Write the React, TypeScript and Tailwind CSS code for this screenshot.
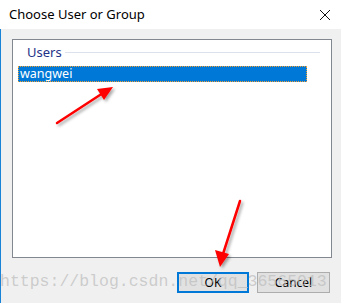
import React from 'react';

const App: React.FC = () => {
    return (
        <div className="relative w-[341px] h-[303px] bg-[#f0f0f0] overflow-hidden font-['Noto_Sans',sans-serif]">
            {/* Title bar */}
            <div className="h-[29px] bg-white flex items-center justify-between pl-[9px] pr-[8px]">
                <span className="text-[13px] text-black leading-none">Choose User or Group</span>
                <svg width="12" height="12" viewBox="0 0 12 12" className="mr-[2px]">
                    <path d="M1 1 L11 11 M11 1 L1 11" stroke="#111" strokeWidth="1" />
                </svg>
            </div>

            {/* Body */}
            <div className="h-[274px] border-l border-[#1883d7] pl-[11px] pt-[10px] flex flex-col">
                {/* List box */}
                <div className="w-[320px] h-[219px] bg-white border border-[#828790] pt-[5px] pl-[5px]">
                    <div className="flex items-center h-[15px] pl-[9px] pr-[11px] gap-[3px]">
                        <span className="text-[13px] leading-none text-[#1e3287]">Users</span>
                        <div className="flex-1 h-px bg-[#dde1ee]" />
                    </div>
                    <div className="mt-[6px] w-[289px] h-[16px] bg-[#0078d7] border border-dotted border-[#f0a030] flex items-center pl-[1px]">
                        <span className="text-[12.5px] leading-none text-white">wangwei</span>
                    </div>
                </div>

                {/* Buttons */}
                <div className="flex gap-[8px] mt-[14px] pl-[165px]">
                    <button className="w-[72px] h-[21px] bg-[#e1e1e1] border-2 border-[#0078d7] text-[12px] text-black leading-none">
                        OK
                    </button>
                    <button className="w-[73px] h-[21px] bg-[#e1e1e1] border border-[#adadad] text-[12px] text-black leading-none">
                        Cancel
                    </button>
                </div>
            </div>

            {/* Watermark */}
            <div className="absolute left-0 top-[272px] text-[16.5px] leading-[20px] text-[#bcbcbc]/70 font-['Liberation_Mono',monospace] whitespace-nowrap pointer-events-none">
                https://blog.csdn.net/qq_36565013
            </div>

            {/* Annotation arrows */}
            <svg className="absolute inset-0 pointer-events-none" width="341" height="303" viewBox="0 0 341 303">
                <defs>
                    <filter id="sh" x="-20%" y="-20%" width="140%" height="140%">
                        <feDropShadow dx="2" dy="2" stdDeviation="1.5" floodColor="#000" floodOpacity="0.35" />
                    </filter>
                </defs>
                <g filter="url(#sh)" fill="#ff0000" stroke="#ff0000">
                    <line x1="57" y1="123" x2="103" y2="93" strokeWidth="2.5" strokeLinecap="round" />
                    <polygon points="113,87 97,89 104,100" stroke="none" />
                    <line x1="240" y1="201" x2="223" y2="254" strokeWidth="2.5" strokeLinecap="round" />
                    <polygon points="220,267 215,250 229,254" stroke="none" />
                </g>
            </svg>
        </div>
    );
};

export default App;
